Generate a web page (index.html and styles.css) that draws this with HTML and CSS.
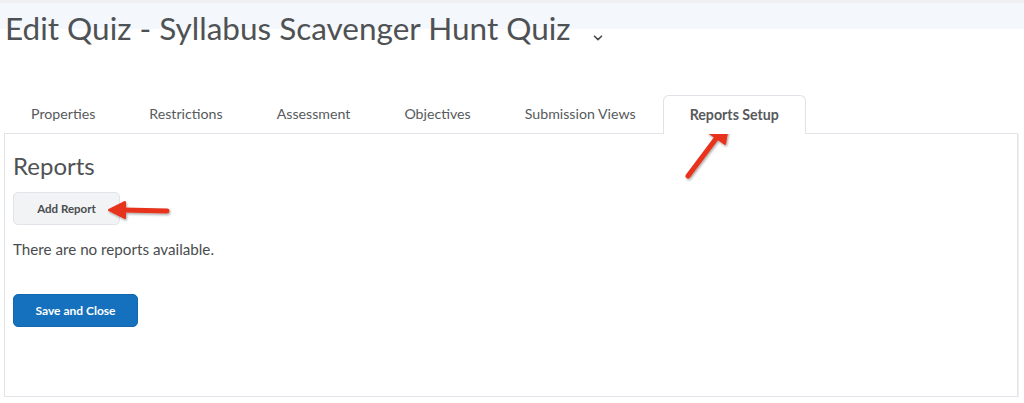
FILE: index.html
```html
<!DOCTYPE html>
<html lang="en">
<head>
  <meta charset="UTF-8" />
  <title>Edit Quiz - Syllabus Scavenger Hunt Quiz</title>
  <link rel="stylesheet" href="styles.css">
</head>
<body>
  <header class="page-header">
    <h1>Edit Quiz - Syllabus Scavenger Hunt Quiz
      <svg class="chevron" width="10" height="6" viewBox="0 0 10 6"><path d="M1.5 1.2 5 4.6 8.5 1.2" fill="none" stroke="#494c4e" stroke-width="1.6" stroke-linecap="round" stroke-linejoin="round"/></svg>
    </h1>
  </header>

  <div class="editor">
    <nav class="tabs">
      <span class="tab">Properties</span>
      <span class="tab">Restrictions</span>
      <span class="tab">Assessment</span>
      <span class="tab">Objectives</span>
      <span class="tab">Submission Views</span>
      <span class="tab active">Reports Setup</span>
    </nav>

    <section class="panel">
      <h2>Reports</h2>
      <button class="btn">Add Report</button>
      <p class="empty">There are no reports available.</p>
      <button class="btn primary">Save and Close</button>
    </section>

    <!-- callout arrows from the tutorial screenshot -->
    <svg class="arrow arrow-tab" width="60" height="70" viewBox="0 0 60 70">
      <defs>
        <filter id="sh1" x="-30%" y="-30%" width="160%" height="160%"><feDropShadow dx="1" dy="1.5" stdDeviation="1.2" flood-color="#000" flood-opacity="0.35"/></filter>
      </defs>
      <g filter="url(#sh1)">
        <path d="M8 60 L38 20" stroke="#e7321c" stroke-width="5" stroke-linecap="round"/>
        <path d="M49 5 L29 17 L45 28 Z" fill="#e7321c" stroke="#e7321c" stroke-width="2" stroke-linejoin="round"/>
      </g>
    </svg>
    <svg class="arrow arrow-btn" width="70" height="24" viewBox="0 0 70 24">
      <defs>
        <filter id="sh2" x="-30%" y="-50%" width="160%" height="200%"><feDropShadow dx="1" dy="1.5" stdDeviation="1.2" flood-color="#000" flood-opacity="0.35"/></filter>
      </defs>
      <g filter="url(#sh2)">
        <path d="M63 12 L20 11" stroke="#e7321c" stroke-width="5" stroke-linecap="round"/>
        <path d="M5 11 L21 3 L21 19 Z" fill="#e7321c" stroke="#e7321c" stroke-width="2" stroke-linejoin="round"/>
      </g>
    </svg>
  </div>
</body>
</html>
```

FILE: styles.css
```css
body {
  margin: 0;
  font-family: Lato, 'Open Sans', sans-serif;
  color: #494c4e;
  background: #fff;
}

.page-header {
  height: 62px;
  background: linear-gradient(#efeff1 0, #efeff1 3px, #f4f7fb 3px, #f4f7fb 29px, #fff 29px);
}

.page-header h1 {
  margin: 0;
  padding: 9px 0 0 5px;
  font-size: 31.5px;
  font-weight: 400;
  line-height: 38px;
  color: #4f5254;
}

.chevron {
  margin-left: 14px;
  vertical-align: -1px;
}

.editor {
  position: relative;
  padding: 33px 6px 0 4px;
}

/* Tabs */
.tabs {
  display: flex;
  height: 38px;
  align-items: flex-end;
}

.tab {
  padding: 0 27px;
  height: 38px;
  line-height: 38px;
  font-size: 14.2px;
  color: #565a5c;
  box-sizing: border-box;
}

.tab.active {
  font-weight: 700;
  border: 1px solid #dfe3e8;
  border-bottom: none;
  border-radius: 6px 6px 0 0;
  background: #fff;
  padding: 0 26px;
  height: 39px;
  margin-bottom: -1px;
  position: relative;
  z-index: 1;
}

/* Panel */
.panel {
  border: 1px solid #e1e4e8;
  box-shadow: 1px 1px 0 #eef0f3;
  height: 264px;
  box-sizing: border-box;
  padding: 17px 8px;
}

.panel h2 {
  margin: 0;
  font-size: 24px;
  font-weight: 400;
  line-height: 30px;
  color: #4f5254;
}

.btn {
  display: block;
  font-family: inherit;
  font-size: 11.5px;
  font-weight: 700;
  color: #494c4e;
  background: #f1f3f5;
  border: 1px solid #e0e3e7;
  border-radius: 5px;
  width: 107px;
  height: 33px;
  margin-top: 11px;
  padding: 0;
}

.btn.primary {
  background: #1571bd;
  border-color: #1268b0;
  color: #fff;
  font-size: 12px;
  width: 125px;
  height: 33px;
  margin-top: 0;
}

.empty {
  margin: 15px 0 35px;
  font-size: 15.2px;
  line-height: 19px;
  color: #494c4e;
}

/* Arrows lying over the content */
.arrow {
  position: absolute;
}

.arrow-tab {
  left: 680px;
  top: 54px;
}

.arrow-btn {
  left: 104px;
  top: 137px;
}
```
